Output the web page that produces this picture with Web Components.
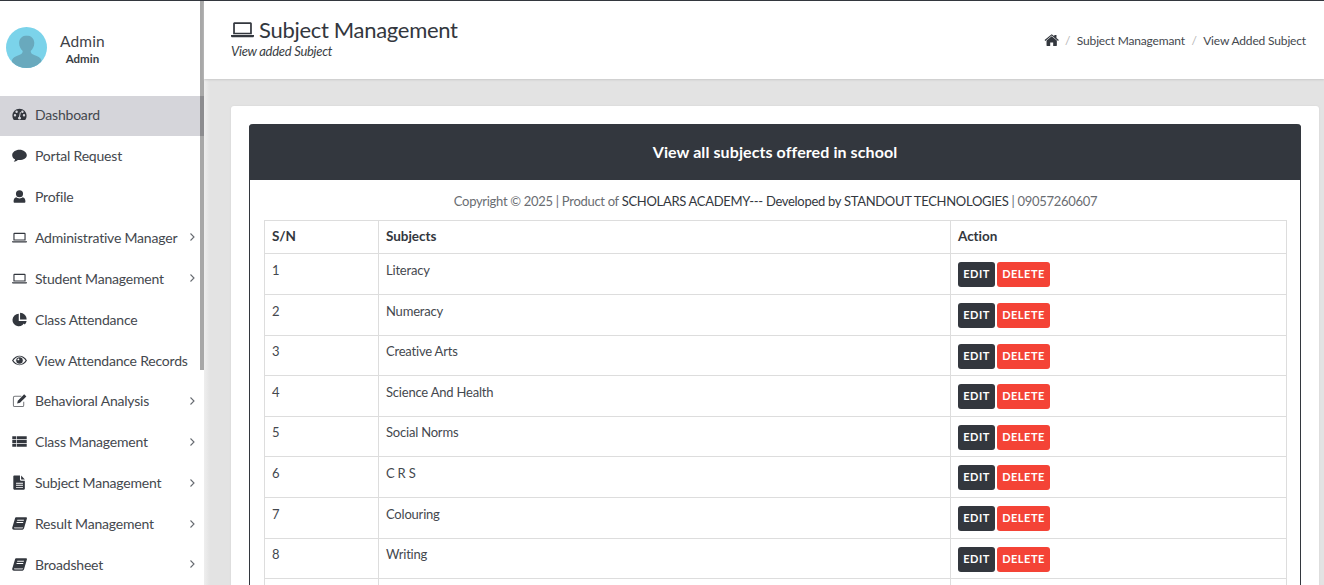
<!DOCTYPE html>
<html>
<head>
<meta charset="utf-8">
<title>Subject Management</title>
<style>
  html, body { margin: 0; padding: 0; height: 100%; overflow: hidden; }
  body { font-family: "Lato", "Liberation Sans", sans-serif; color: #33373e; background: #e3e3e3; }
</style>
</head>
<body>
<app-shell>
  <side-nav slot="side">
    <nav-item icon="dashboard" active>Dashboard</nav-item>
    <nav-item icon="comment">Portal Request</nav-item>
    <nav-item icon="user">Profile</nav-item>
    <nav-item icon="laptop" more>Administrative Manager</nav-item>
    <nav-item icon="laptop" more>Student Management</nav-item>
    <nav-item icon="pie">Class Attendance</nav-item>
    <nav-item icon="eye">View Attendance Records</nav-item>
    <nav-item icon="edit" more>Behavioral Analysis</nav-item>
    <nav-item icon="list" more>Class Management</nav-item>
    <nav-item icon="file" more>Subject Management</nav-item>
    <nav-item icon="book" more>Result Management</nav-item>
    <nav-item icon="book" more>Broadsheet</nav-item>
  </side-nav>
  <page-header slot="head" title="Subject Management" sub="View added Subject"></page-header>
  <subject-panel heading="View all subjects offered in school">
    <subject-row n="1" name="Literacy"></subject-row>
    <subject-row n="2" name="Numeracy"></subject-row>
    <subject-row n="3" name="Creative Arts"></subject-row>
    <subject-row n="4" name="Science And Health"></subject-row>
    <subject-row n="5" name="Social Norms"></subject-row>
    <subject-row n="6" name="C R S"></subject-row>
    <subject-row n="7" name="Colouring"></subject-row>
    <subject-row n="8" name="Writing"></subject-row>
    <subject-row blank></subject-row>
  </subject-panel>
</app-shell>

<script>
// icon shapes, all on a 16x16 box
const ICONS = {
  dashboard: '<path fill-rule="evenodd" d="M8 1.800C3.700 1.800.4 5.200.4 9.400c0 1.500.4 2.900 1.100 4 .2.300.4.400.7.400h11.600c.3 0 .5-.1.700-.4.7-1.100 1.100-2.500 1.100-4 0-4.200-3.300-7.600-7.600-7.600zM3.200 10.100a1.300 1.300 0 1 1 0-2.600 1.300 1.300 0 0 1 0 2.600zM4.900 6.300a1.300 1.300 0 1 1 0-2.600 1.300 1.300 0 0 1 0 2.600zm4.700 6a1.700 1.700 0 0 1-3.200 0c-.2-.9.300-1.700 1.100-2l.9-4.600c.1-.3.300-.5.600-.4.300.1.500.3.400.6l-.9 4.500c.8.400 1.300 1.100 1.100 1.900zM11.100 6.300a1.300 1.300 0 1 1 0-2.600 1.300 1.300 0 0 1 0 2.600zm1.700 3.800a1.300 1.300 0 1 1 0-2.600 1.300 1.300 0 0 1 0 2.600z"/>',
  comment: '<path d="M8 1.800c-4.300 0-7.800 2.600-7.800 5.800 0 1.900 1.200 3.500 3.100 4.500-.2 1-.7 1.900-1.400 2.500 1.700-.1 3.100-.9 4.300-1.900.6.100 1.200.1 1.800.1 4.300 0 7.800-2.300 7.800-5.200S12.300 1.800 8 1.800z"/>',
  user: '<path d="M8 1.300a3.500 3.500 0 1 1 0 7.600 3.500 3.500 0 0 1 0-7.600zM2.800 14.700c-.6 0-1.100-.5-1.100-1.200 0-2.400.7-4.800 3-4.800.6.600 1.900 1.300 3.300 1.300s2.700-.7 3.300-1.300c2.300 0 3 2.400 3 4.800 0 .7-.5 1.200-1.100 1.200z"/>',
  laptop: '<path fill-rule="evenodd" d="M2.600 3h10.800c.7 0 1.100.4 1.100 1v7.300H1.500V4c0-.6.400-1 1.100-1zm.1 1.200v6h10.600v-6zM0 11.900h16v.6c0 .5-.4.900-.9.900H.9c-.5 0-.9-.4-.9-.9z"/>',
  pie: '<path d="M7.200 1.900a6.700 6.700 0 1 0 6.600 7.800H7.200z"/><path d="M8.600.8v7.200h7C15.600 4 12.400.8 8.600.8z"/><path d="M9.600 9.600h5.900c-.2 1.400-.9 2.700-1.900 3.700z"/>',
  eye: '<path d="M8 3c3.300 0 6.200 2 8 5-1.800 3-4.700 5-8 5s-6.200-2-8-5c1.800-3 4.700-5 8-5z"/><circle cx="8" cy="8" r="4.300" fill="#fff"/><circle cx="8" cy="8" r="3.500"/><circle cx="6.800" cy="6.800" r="1" fill="#fff"/><path d="M1.500 8c.8-1.200 1.800-2.200 3-2.900L4 8l.5 2.900C3.300 10.200 2.300 9.200 1.500 8zM14.500 8c-.8-1.200-1.800-2.200-3-2.900l.5 2.900-.5 2.900c1.200-.7 2.200-1.700 3-2.900z" fill="#fff"/>',
  edit: '<path fill="none" stroke="#77797d" stroke-width="1.100" d="M10 3.500H3c-.9 0-1.500.6-1.500 1.500v8c0 .9.600 1.500 1.500 1.500h8c.9 0 1.500-.6 1.500-1.500V9.200"/><path d="M13 1.400l2.300 2.300-6.800 6.800-3 .7.700-3z"/>',
  list: '<path d="M.3 2.400h4.300v3.300H.3zM5.300 2.400h10.400v3.300H5.300zM.3 6.400h4.300v3.300H.3zM5.300 6.400h10.400v3.300H5.300zM.3 10.400h4.300v3.300H.3zM5.300 10.400h10.400v3.300H5.300z"/>',
  file: '<path fill-rule="evenodd" d="M2.300.4h6.200v4.700c0 .5.400.9.900.9h4.300v8.700c0 .5-.4.900-.9.900H2.300c-.5 0-.9-.4-.9-.9V1.300c0-.5.400-.9.900-.9zM4.300 8.300v1h7.400v-1zm0 2.200v1h7.400v-1zm0 2.200v1h7.400v-1z"/><path d="M9.700.5l4 4.300h-4z"/>',
  book: '<path fill-rule="evenodd" d="M4.300 1.400h10.800c.8 0 1 .6.800 1.300l-3 10c-.3 1-1.200 1.900-2.400 1.900H2C.7 14.600 0 13.500.3 12.200L3.100 2.800c.2-.8.700-1.400 1.200-1.400zm1.400 2.600-.3 1h7.100l.3-1zM5 6.400l-.3 1h7.100l.3-1z"/><path d="M2.300 11.600c-.3.900.1 1.700.9 1.700h7.800c.3 0 .5-.2.600-.5l.3-.8H3.100c-.3 0-.6-.2-.8-.4z" fill="#c3c4c6"/>',
  home: '<path d="M8.200 3.400 2.700 8v5.300c0 .3.200.5.500.5h3.400V10h3.200v3.800h3.400c.3 0 .5-.2.500-.5V8z"/><path d="M8.200 1.200.6 7.500l.8.900 6.800-5.700L15 8.400l.8-.9-2.500-2.100V2H11v1.500z"/>'
};

class FaIcon extends HTMLElement {
  connectedCallback() {
    const size = this.getAttribute('size') || 16;
    const name = this.getAttribute('name');
    this.attachShadow({ mode: 'open' }).innerHTML = `
      <style>
        :host { display: inline-flex; width: ${size}px; height: ${size}px; }
        svg { width: 100%; height: 100%; fill: currentColor; }
      </style>
      <svg viewBox="0 0 16 16">${ICONS[name] || ''}</svg>`;
  }
}
customElements.define('fa-icon', FaIcon);

class AppShell extends HTMLElement {
  constructor() {
    super();
    this.attachShadow({ mode: 'open' }).innerHTML = `
      <style>
        :host { display: grid; grid-template-columns: 204px 1fr; height: 585px; overflow: hidden;
                border-top: 1px solid #33373e; box-sizing: border-box; }
        .right { display: flex; flex-direction: column; min-width: 0; height: 584px; }
        .body { flex: 1; padding: 27px 5px 0 27px; overflow: hidden; background: linear-gradient(90deg, #eeeeee, #e3e3e3 6px); }
      </style>
      <slot name="side"></slot>
      <div class="right">
        <slot name="head"></slot>
        <div class="body"><slot></slot></div>
      </div>`;
  }
}
customElements.define('app-shell', AppShell);

class SideNav extends HTMLElement {
  constructor() {
    super();
    this.attachShadow({ mode: 'open' }).innerHTML = `
      <style>
        :host { display: block; position: relative; background: #fff; height: 584px; overflow: hidden; }
        .user { display: flex; align-items: center; gap: 13px; height: 94.700px; padding: 0 0 0 6px; box-sizing: border-box; }
        .avatar { width: 41px; height: 41px; flex: none; margin-top: -1px; }
        .who { text-align: center; margin-top: 2px; }
        .name { font-size: 15.5px; line-height: 19px; color: #3f4349; letter-spacing: .15px; }
        .role { font-size: 11.5px; line-height: 16px; font-weight: 700; color: #3a3e44; }
        .thumb { position: absolute; left: 200px; top: 0; width: 3.500px; height: 369px; background: rgba(0,0,0,.34); }
      </style>
      <div class="user">
        <svg class="avatar" viewBox="0 0 41 41">
          <defs><clipPath id="c"><circle cx="20.500" cy="20.500" r="20.500"/></clipPath></defs>
          <circle cx="20.500" cy="20.500" r="20.500" fill="#7bd3ea"/>
          <g clip-path="url(#c)" fill="#69a9bd">
            <path d="M20.500 8.500c4.800 0 7.800 3.200 7.800 7.500 0 3.300-1.600 6.200-3.600 8 0 2 1 3 3.500 4 3.500 1.300 6.200 2.300 7.200 5v9H6v-9c1-2.700 3.700-3.700 7.200-5 2.500-1 3.500-2 3.500-4-2-1.800-3.600-4.700-3.600-8 0-4.300 3-7.500 7.800-7.500z"/>
          </g>
        </svg>
        <div class="who"><div class="name">Admin</div><div class="role">Admin</div></div>
      </div>
      <slot></slot>
      <div class="thumb"></div>`;
  }
}
customElements.define('side-nav', SideNav);

class NavItem extends HTMLElement {
  connectedCallback() {
    const more = this.hasAttribute('more');
    this.attachShadow({ mode: 'open' }).innerHTML = `
      <style>
        :host { display: flex; align-items: center; height: 40px; margin-bottom: .9px; padding: 0 0 2px 12px; box-sizing: border-box;
                font-size: 14px; letter-spacing: -.2px; color: #44484e; white-space: nowrap; position: relative; }
        :host([active]) { background: #d5d5da; }
        fa-icon { margin-right: 8px; color: #33373e; flex: none; width: 15px; }
        .label { flex: 1; }
        .arrow { position: absolute; left: 189px; top: 50%; margin-top: -6px; width: 7px; height: 10px; }
      </style>
      <fa-icon name="${this.getAttribute('icon')}" size="15"></fa-icon>
      <span class="label"><slot></slot></span>
      ${more ? '<svg class="arrow" viewBox="0 0 7 10"><path d="M1.500 1.500 5 5 1.500 8.500" fill="none" stroke="#666a70" stroke-width="1.100"/></svg>' : ''}`;
  }
}
customElements.define('nav-item', NavItem);

class PageHeader extends HTMLElement {
  connectedCallback() {
    this.attachShadow({ mode: 'open' }).innerHTML = `
      <style>
        :host { display: flex; justify-content: space-between; align-items: center; height: 78px; background: #fff;
                padding: 0 18px 0 27px; box-sizing: border-box; box-shadow: 0 1px 2px #c9c9c9; position: relative; flex: none; }
        h1 { margin: 0; font-size: 22px; letter-spacing: -.3px; font-weight: 400; line-height: 28px; color: #33373e; display: flex; align-items: center; gap: 5px; }
        .sub { font-size: 13px; letter-spacing: -.27px; font-style: italic; line-height: 14px; color: #3a3e44; }
        .left { margin-top: -7px; }
        .crumbs { display: flex; align-items: center; font-size: 12px; letter-spacing: -.16px; color: #44484e; margin-top: 1px; }
        .sep { color: #b5b5b5; margin: 0 6.500px; }
        fa-icon { color: #33373e; }
      </style>
      <div class="left">
        <h1><fa-icon name="laptop" size="23"></fa-icon>${this.getAttribute('title')}</h1>
        <div class="sub">${this.getAttribute('sub')}</div>
      </div>
      <div class="crumbs">
        <fa-icon name="home" size="15"></fa-icon><span class="sep">/</span>
        <span>Subject Managemant</span><span class="sep">/</span><span>View Added Subject</span>
      </div>`;
  }
}
customElements.define('page-header', PageHeader);

class SubjectPanel extends HTMLElement {
  connectedCallback() {
    this.attachShadow({ mode: 'open' }).innerHTML = `
      <style>
        :host { display: block; background: #fff; padding: 18px 18px 0; border-radius: 3px 3px 0 0; box-shadow: 0 0 2px #d2d2d2; }
        .box { border: 1px solid #33373e; border-top: 0; border-radius: 4px 4px 0 0; padding: 0 13px 0 14px; margin: 0; }
        .top { background: #33373e; color: #fff; height: 56px; line-height: 56px; text-align: center; font-size: 16px; letter-spacing: .09px;
               font-weight: 700; margin: 0 -14px 0 -15px; border-radius: 4px 4px 0 0; }
        .copy { text-align: center; font-size: 13px; letter-spacing: -.3px; padding-top: 2px; line-height: 38px; color: #6a6d72; }
        .copy b { font-weight: 400; color: #33373e; }
        .tbl { border: 1px solid #ddd; border-bottom: 0; }
        .row { display: grid; grid-template-columns: 113px 572px 1fr; height: 32.450px; font-size: 13.500px; letter-spacing: -.05px; font-weight: 700; color: #33373e; }
        .row div { padding: 7px 7px 0; box-sizing: border-box; }
        .row div + div { border-left: 1px solid #ddd; }
      </style>
      <div class="box">
        <div class="top">${this.getAttribute('heading')}</div>
        <div class="copy">Copyright © 2025 | Product of <b>SCHOLARS ACADEMY--- Developed by STANDOUT TECHNOLOGIES</b> | 09057260607</div>
        <div class="tbl">
          <div class="row"><div>S/N</div><div>Subjects</div><div>Action</div></div>
          <slot></slot>
        </div>
      </div>`;
  }
}
customElements.define('subject-panel', SubjectPanel);

class SubjectRow extends HTMLElement {
  connectedCallback() {
    // the last row only shows its top border above the fold
    const blank = this.hasAttribute('blank');
    this.attachShadow({ mode: 'open' }).innerHTML = `
      <style>
        :host { display: grid; grid-template-columns: 113px 572px 1fr; height: 40.620px; box-sizing: border-box;
                border-top: 1px solid #ddd; font-size: 13px; letter-spacing: -.2px; color: #44484e; }
        .c { padding: 7.500px 7px 0; box-sizing: border-box; }
        .c + .c { border-left: 1px solid #ddd; }
        .btns { display: flex; gap: 2px; padding-top: 8px; letter-spacing: 0; }
        .b { display: block; height: 25px; line-height: 24px; border-radius: 3px; color: #fff; font-size: 11px;
             font-weight: 700; letter-spacing: .5px; text-align: center; }
        .e { width: 37px; background: #33373e; }
        .d { width: 53px; background: #f44336; }
      </style>
      <div class="c">${this.getAttribute('n') || ''}</div>
      <div class="c">${this.getAttribute('name') || ''}</div>
      <div class="c btns">${blank ? '' : '<span class="b e">EDIT</span><span class="b d">DELETE</span>'}</div>`;
  }
}
customElements.define('subject-row', SubjectRow);
</script>
</body>
</html>
